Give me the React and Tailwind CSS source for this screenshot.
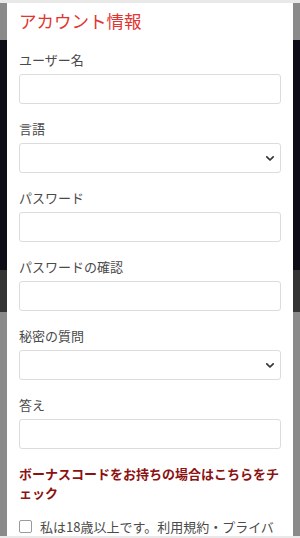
import React from "react";

const font = { fontFamily: '"Noto Sans CJK JP", "Noto Sans", sans-serif' };

function Field({ label, children }) {
  return (
    <div className="mb-[15px]">
      <div className="text-[13px] leading-[20px] text-[#4a4a4a] mb-[4px]">{label}</div>
      {children}
    </div>
  );
}

function TextInput({ type = "text" }) {
  return (
    <input
      type={type}
      className="block w-full h-[30px] border border-[#dcdcdc] rounded-[3px] bg-white px-2 text-[13px]"
    />
  );
}

function Select() {
  return (
    <div className="relative h-[30px] w-full border border-[#dcdcdc] rounded-[3px] bg-white">
      <svg
        className="absolute right-[5px] top-[11px]"
        width="10"
        height="7"
        viewBox="0 0 10 7"
        fill="none"
      >
        <path d="M1.8 1.8 L5 5 L8.2 1.8" stroke="#333" strokeWidth="1.7" strokeLinecap="round" strokeLinejoin="round" />
      </svg>
    </div>
  );
}

export default function App() {
  return (
    <div className="relative w-[300px] h-[538px] overflow-hidden" style={font}>
      <div className="flex flex-col h-full">
        <div className="h-[3px] bg-[#e9e9e9]" />
        <div className="h-[37px] bg-[#8a8a8a]" />
        <div className="h-[230px] bg-[#0d0c17]" />
        <div className="h-[42px] bg-[#343434]" />
        <div className="flex-1 bg-[#8a8a8a]" />
        <div className="h-[2px] bg-[#e9e9e9]" />
      </div>
      <div className="absolute left-[7px] top-[3px] w-[286px] h-[533px] bg-white px-[12px] pt-[5px]">
        <div className="text-[17.5px] leading-[26px] text-[#e3342f] mb-[16px]">アカウント情報</div>
        <Field label="ユーザー名"><TextInput /></Field>
        <Field label="言語"><Select /></Field>
        <Field label="パスワード"><TextInput type="password" /></Field>
        <Field label="パスワードの確認"><TextInput type="password" /></Field>
        <Field label="秘密の質問"><Select /></Field>
        <Field label="答え"><TextInput /></Field>
        <div className="text-[13px] leading-[19px] font-bold text-[#8b1212] w-[261px] mt-[12px]">
          ボーナスコードをお持ちの場合はこちらをチェック
        </div>
        <div className="flex items-start gap-[8px] mt-[15px]">
          <div className="w-[13px] h-[13px] mt-[3px] border border-[#9a9a9a] rounded-[2px] bg-white shrink-0" />
          <div className="text-[13px] leading-[19px] text-[#4a4a4a]">
            私は18歳以上です。利用規約・プライバシーポリシーに同意します。
          </div>
        </div>
      </div>
    </div>
  );
}
